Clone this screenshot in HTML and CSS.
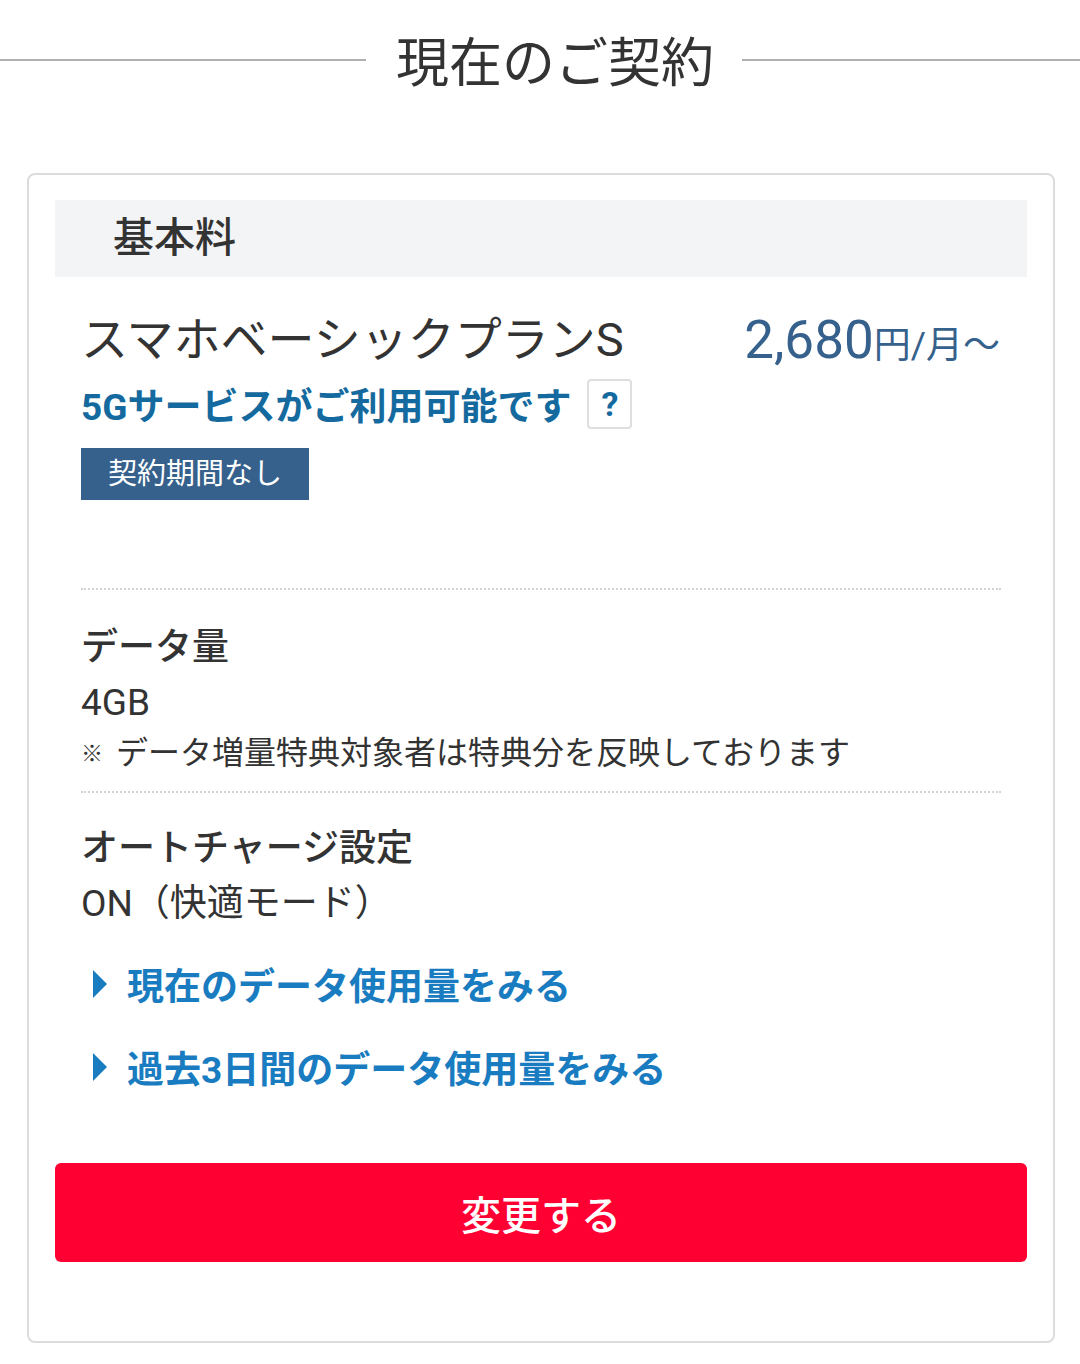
FILE: index.html
```html
<!DOCTYPE html>
<html lang="ja">
<head>
<meta charset="utf-8">
<link rel="stylesheet" href="styles.css">
</head>
<body>
<div class="page">
  <div class="heading">
    <span class="heading-line heading-line-left"></span>
    <h1 class="heading-text">現在のご契約</h1>
    <span class="heading-line heading-line-right"></span>
  </div>

  <div class="card">
    <div class="card-head">基本料</div>

    <div class="plan">
      <div class="plan-row">
        <div class="plan-name">スマホベーシックプランS</div>
        <div class="plan-price"><span class="price-num">2,680</span><span class="price-unit">円/月〜</span></div>
      </div>
      <div class="plan-5g">
        <span class="plan-5g-text">5Gサービスがご利用可能です</span>
        <span class="help-box">?</span>
      </div>
      <div class="badge">契約期間なし</div>
    </div>

    <div class="info">
      <div class="info-title">データ量</div>
      <div class="info-value">4GB</div>
      <div class="info-note"><span class="note-mark">※</span>データ増量特典対象者は特典分を反映しております</div>
    </div>

    <div class="info info-last">
      <div class="info-title">オートチャージ設定</div>
      <div class="info-value">ON（快適モード）</div>
    </div>

    <div class="links">
      <a class="link" href="#"><span class="tri"></span>現在のデータ使用量をみる</a>
      <a class="link" href="#"><span class="tri"></span>過去3日間のデータ使用量をみる</a>
    </div>

    <button class="change-btn" type="button">変更する</button>
  </div>
</div>
</body>
</html>
```

FILE: styles.css
```css
* { box-sizing: border-box; }
html, body {
  margin: 0;
  padding: 0;
  background: #fff;
}
body {
  font-family: Roboto, "Noto Sans CJK JP", sans-serif;
  color: #333;
}
.page {
  width: 1080px;
}
.heading {
  display: flex;
  align-items: flex-start;
  padding-top: 30px;
  height: 98px;
}
.heading-line {
  height: 2px;
  margin-top: 29px;
  background: #b0b0b0;
}
.heading-line-left {
  flex: 368 1 0;
}
.heading-line-right {
  flex: 340 1 0;
}
.heading-text {
  margin: 0;
  padding: 0 28px 0 30px;
  font-size: 53px;
  line-height: 68px;
  font-weight: 400;
  color: #333;
}
.card {
  margin: 75px 25px 0 27px;
  border: 2px solid #dcdcdc;
  border-radius: 8px;
  padding: 25px 26px 79px;
}
.card-head {
  height: 77px;
  background: #f3f4f5;
  padding-left: 58px;
  font-size: 41px;
  line-height: 77px;
  font-weight: 500;
  color: #333;
}
.plan {
  margin: 0 26px;
  padding: 33px 0 88px;
  border-bottom: 2px dotted #d4d4d4;
}
.plan-row {
  display: flex;
  justify-content: space-between;
  align-items: flex-start;
  height: 60px;
}
.plan-name {
  font-size: 47px;
  line-height: 60px;
  color: #333;
}
.plan-price {
  color: #36618c;
  line-height: 60px;
  height: 60px;
  padding-right: 1px;
  white-space: nowrap;
}
.price-num {
  font-size: 53px;
}
.price-unit {
  font-size: 37px;
}
.plan-5g {
  display: flex;
  align-items: center;
  margin-top: 9px;
  height: 50px;
}
.plan-5g-text {
  font-size: 37px;
  font-weight: 700;
  color: #146a9e;
}
.help-box {
  margin-left: 16px;
  width: 45px;
  height: 50px;
  border: 2px solid #dedede;
  border-radius: 4px;
  display: flex;
  align-items: center;
  justify-content: center;
  font-size: 34px;
  font-weight: 700;
  color: #146a9e;
}
.badge {
  display: inline-block;
  vertical-align: top;
  margin-top: 19px;
  height: 52px;
  padding: 0 27px;
  background: #36618c;
  color: #fff;
  font-size: 29px;
  line-height: 52px;
}
.info {
  margin: 0 26px;
  padding: 30px 0 12px;
  border-bottom: 2px dotted #d4d4d4;
}
.info-last {
  border-bottom: none;
  padding: 28px 0 0;
}
.info-title {
  font-size: 37px;
  line-height: 56px;
  font-weight: 500;
  color: #333;
}
.info-value {
  margin-top: 2px;
  font-size: 37px;
  line-height: 50px;
  color: #333;
}
.info-note {
  margin-top: 0;
  font-size: 32px;
  line-height: 50px;
  color: #333;
}
.note-mark {
  display: inline-block;
  font-size: 22px;
  width: 35px;
  vertical-align: 3px;
}
.links {
  margin: 27px 26px 0;
  display: flex;
  flex-direction: column;
  gap: 27px;
}
.link {
  display: flex;
  align-items: center;
  height: 56px;
  font-size: 37px;
  font-weight: 700;
  color: #1a7cc0;
  text-decoration: none;
}
.tri {
  width: 0;
  height: 0;
  margin-left: 12px;
  margin-right: 20px;
  border-top: 14px solid transparent;
  border-bottom: 14px solid transparent;
  border-left: 14px solid #1a7cc0;
}
.change-btn {
  display: block;
  width: 100%;
  margin-top: 68px;
  height: 99px;
  border: none;
  border-radius: 6px;
  background: #ff0033;
  color: #fff;
  font-family: Roboto, "Noto Sans CJK JP", sans-serif;
  font-size: 40px;
  font-weight: 500;
}
```
